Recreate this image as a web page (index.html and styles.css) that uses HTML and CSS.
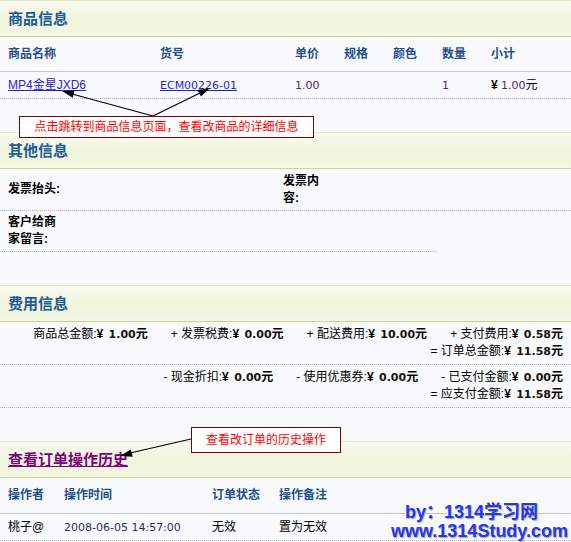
FILE: index.html
```html
<!DOCTYPE html>
<html lang="zh-CN">
<head>
    <meta charset="UTF-8">
    <title>订单信息</title>
    <link rel="stylesheet" href="styles.css">
</head>
<body>
    <div class="section">
        <div class="band"><h2>商品信息</h2></div>
        <div class="goods head">
            <span>商品名称</span><span>货号</span><span>单价</span><span>规格</span><span>颜色</span><span>数量</span><span>小计</span>
        </div>
        <div class="goods item">
            <a href="#">MP4金星JXD6</a>
            <a href="#" class="num">ECM00226-01</a>
            <span class="num purple">1.00</span>
            <span></span>
            <span></span>
            <span class="num purple">1</span>
            <span><b class="yen">¥</b> <span class="num purple">1.00</span>元</span>
        </div>
    </div>

    <div class="section">
        <div class="band"><h2>其他信息</h2></div>
        <div class="other first">
            <span class="lbl w1">发票抬头:</span>
            <span class="val1"></span>
            <span class="lbl w2">发票内容:</span>
            <span></span>
        </div>
        <div class="other second">
            <span class="lbl w1">客户给商家留言:</span>
        </div>
    </div>

    <div class="section">
        <div class="band"><h2>费用信息</h2></div>
        <div class="fee-row">
            <div class="fee-line">
                <span class="item">商品总金额:<b class="yen">¥</b> <b class="amt">1.00</b><b>元</b></span>
                <span class="item">+ 发票税费:<b class="yen">¥</b> <b class="amt">0.00</b><b>元</b></span>
                <span class="item">+ 配送费用:<b class="yen">¥</b> <b class="amt">10.00</b><b>元</b></span>
                <span class="item">+ 支付费用:<b class="yen">¥</b> <b class="amt">0.58</b><b>元</b></span>
            </div>
            <div class="fee-line">
                <span class="item">= 订单总金额:<b class="yen">¥</b> <b class="amt">11.58</b><b>元</b></span>
            </div>
        </div>
        <div class="fee-row">
            <div class="fee-line">
                <span class="item">- 现金折扣:<b class="yen">¥</b> <b class="amt">0.00</b><b>元</b></span>
                <span class="item">- 使用优惠券:<b class="yen">¥</b> <b class="amt">0.00</b><b>元</b></span>
                <span class="item">- 已支付金额:<b class="yen">¥</b> <b class="amt">0.00</b><b>元</b></span>
            </div>
            <div class="fee-line">
                <span class="item">= 应支付金额:<b class="yen">¥</b> <b class="amt">11.58</b><b>元</b></span>
            </div>
        </div>
    </div>

    <div class="section last">
        <div class="band"><h2><a href="#" class="history-link">查看订单操作历史</a></h2></div>
        <div class="hist head">
            <span>操作者</span><span>操作时间</span><span>订单状态</span><span>操作备注</span>
        </div>
        <div class="hist item">
            <span>桃子@</span>
            <span class="num navy">2008-06-05 14:57:00</span>
            <span>无效</span>
            <span>置为无效</span>
        </div>
    </div>

    <!-- 说明箭头 -->
    <svg class="arrows" width="571" height="542" viewBox="0 0 571 542">
        <g stroke="#000" stroke-width="1.2" fill="none">
            <line x1="153" y1="116" x2="72" y2="94"/>
            <line x1="153" y1="116" x2="200" y2="93"/>
            <line x1="191" y1="439" x2="130" y2="453"/>
        </g>
        <g fill="#000">
            <polygon points="62,91 74.5,90.6 72.7,97.8"/>
            <polygon points="210,88 200.9,96.6 197.5,90"/>
            <polygon points="120,456 132.7,456.8 130.8,449.6"/>
        </g>
    </svg>

    <div class="note note-goods">点击跳转到商品信息页面，查看改商品的详细信息</div>
    <div class="note note-history">查看改订单的历史操作</div>

    <div class="watermark">
        <div class="wm-by">by：1314学习网</div>
        <div>www.1314Study.com</div>
    </div>
</body>
</html>
```

FILE: styles.css
```css
body {
    margin: 0;
    width: 571px;
    height: 542px;
    overflow: hidden;
    position: relative;
    background: #f9fafd;
    color: #000;
    font-family: "Liberation Sans", "Noto Sans CJK SC", sans-serif;
    font-size: 12px;
    line-height: 17px;
}

.section {
    margin-bottom: 33px;
}

.section.last {
    margin-bottom: 0;
}

/* 标题条 */
.band {
    height: 35px;
    display: flex;
    align-items: center;
    padding-left: 8px;
    border-top: 1px solid #e0e8c2;
    border-bottom: 1px solid #c6da86;
    background: linear-gradient(to bottom, #f8faef 0%, #f0f5dc 55%, #f3f7e4 100%);
}

.band h2 {
    margin: 0;
    font-size: 15px;
    font-weight: bold;
    color: #1c5a9a;
}

.history-link {
    color: #800080;
}

a {
    color: #2323d6;
}

.num {
    font-family: "DejaVu Sans", "Noto Sans CJK SC", sans-serif;
    font-size: 11px;
}

.purple {
    color: #55217f;
}

.navy {
    color: #2c2a68;
}

.yen {
    font-weight: bold;
}

/* 商品表 */
.goods {
    display: grid;
    grid-template-columns: 152px 135px 49px 49px 49px 49px 1fr;
    align-items: center;
    padding-left: 8px;
}

.head {
    color: #1f4f8c;
    font-weight: bold;
    height: 34px;
    border-bottom: 1px solid #c6c6c6;
}

.item {
    height: 26px;
    border-bottom: 1px dotted #b8b8b8;
}

/* 其他信息 */
.other {
    display: flex;
    align-items: center;
    padding-left: 8px;
    border-bottom: 1px dotted #b8b8b8;
    box-sizing: border-box;
}

.other.first {
    height: 42px;
}

.other.second {
    height: 41px;
    width: 437px;
}

.lbl {
    font-weight: bold;
}

.w1 {
    width: 54px;
}

.val1 {
    width: 221px;
}

.w2 {
    width: 42px;
}

/* 费用信息 */
.fee-row {
    height: 42px;
    display: flex;
    flex-direction: column;
    justify-content: center;
    align-items: flex-end;
    padding-right: 8px;
    border-bottom: 1px dotted #b8b8b8;
}

.fee-line {
    display: flex;
}

.fee-line .item {
    height: auto;
    border: 0;
}

.fee-line .item + .item {
    margin-left: 23px;
}

.fee-line .yen {
    margin-right: 2px;
}

.amt {
    font-family: "DejaVu Sans", sans-serif;
    font-size: 11px;
    color: #1a1208;
}

/* 操作历史 */
.hist {
    display: grid;
    grid-template-columns: 56px 148px 67px 1fr;
    align-items: center;
    padding-left: 8px;
}

.hist.head {
    height: 35px;
}

/* 说明 */
.arrows {
    position: absolute;
    left: 0;
    top: 0;
    pointer-events: none;
}

.note {
    position: absolute;
    box-sizing: border-box;
    background: #fff;
    border: 1px solid #800000;
    color: #ff0000;
    text-align: center;
}

.note-goods {
    left: 19px;
    top: 116px;
    width: 295px;
    height: 22px;
    line-height: 20px;
}

.note-history {
    left: 191px;
    top: 427px;
    width: 150px;
    height: 26px;
    line-height: 24px;
}

.watermark {
    position: absolute;
    left: 391px;
    top: 503px;
    font-family: "Liberation Sans", "Noto Sans CJK SC", sans-serif;
    font-weight: bold;
    font-size: 18px;
    line-height: 19px;
    color: #2238f2;
    text-shadow: 1px 1px 1px #a0a0b8, -1px -1px 0 #fff, 1px -1px 0 #fff, -1px 1px 0 #fff;
    white-space: nowrap;
}

.wm-by {
    padding-left: 14px;
}
```
